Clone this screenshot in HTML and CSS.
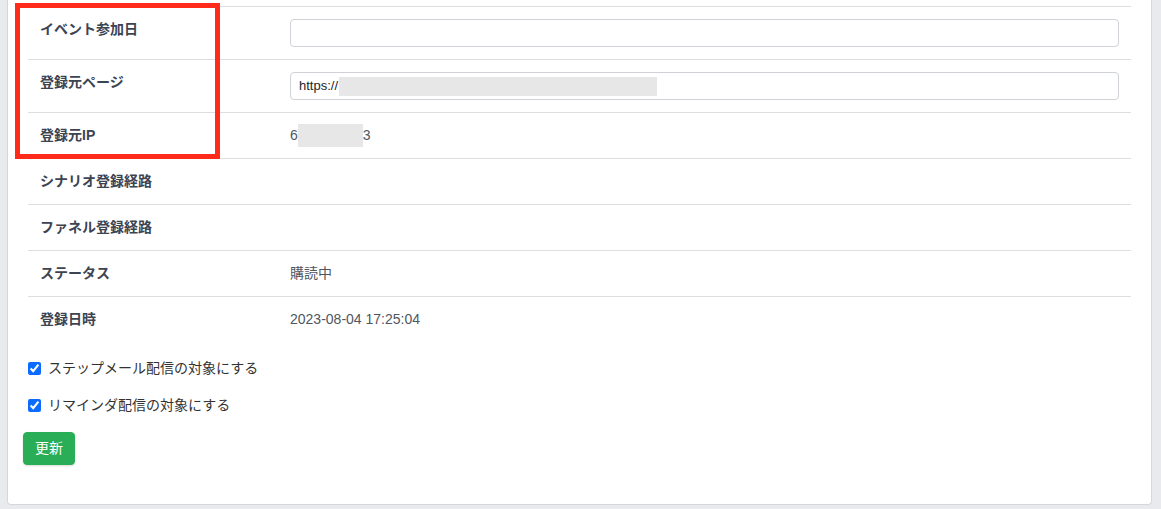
FILE: index.html
```html
<!DOCTYPE html>
<html lang="ja">
<head>
<meta charset="utf-8">
<title>登録情報</title>
<link rel="stylesheet" href="styles.css">
</head>
<body>
<div class="page">
  <div class="card">
    <table class="info-table">
      <tbody>
        <tr>
          <th>イベント参加日</th>
          <td><input class="text-input" type="text" value=""></td>
        </tr>
        <tr>
          <th>登録元ページ</th>
          <td><div class="text-input fake-input">https://<span class="redact redact-url"></span></div></td>
        </tr>
        <tr>
          <th>登録元IP</th>
          <td>6<span class="redact redact-ip"></span>3</td>
        </tr>
        <tr>
          <th>シナリオ登録経路</th>
          <td></td>
        </tr>
        <tr>
          <th>ファネル登録経路</th>
          <td></td>
        </tr>
        <tr>
          <th>ステータス</th>
          <td>購読中</td>
        </tr>
        <tr>
          <th>登録日時</th>
          <td>2023-08-04 17:25:04</td>
        </tr>
      </tbody>
    </table>
    <label class="check-row"><input type="checkbox" checked><span>ステップメール配信の対象にする</span></label>
    <label class="check-row"><input type="checkbox" checked><span>リマインダ配信の対象にする</span></label>
    <button class="btn-update" type="button">更新</button>
  </div>
  <div class="highlight"></div>
</div>
</body>
</html>
```

FILE: styles.css
```css
html, body {
  margin: 0;
  padding: 0;
  background: #e9eaed;
  height: 509px;
  overflow: hidden;
}

.page {
  position: relative;
  padding: 0 9px 0 7px;
  font-family: "Liberation Sans", "Noto Sans CJK JP", sans-serif;
  font-size: 14px;
  line-height: 21px;
  color: #495057;
}

.card {
  background: #fff;
  border: 1px solid #d5d7db;
  border-top: 0;
  border-radius: 0 0 4px 4px;
  padding: 6px 20px 38px 20px;
  height: 460px;
}

.info-table {
  width: 100%;
  border-collapse: collapse;
  margin-bottom: 16px;
}

.info-table th,
.info-table td {
  border-top: 1px solid #dcdee2;
  padding: 12px;
  vertical-align: top;
  text-align: left;
  height: 21px;
}

.info-table th {
  width: 226px;
  font-weight: 700;
  color: #3c4452;
}

.info-table td {
  font-weight: 400;
  color: #4f5661;
}

.text-input {
  display: block;
  box-sizing: border-box;
  width: 100%;
  height: 28px;
  margin: 0;
  border: 1px solid #cfd2d6;
  border-radius: 4px;
  background: #fff;
  padding: 0 8px;
  font-family: "Liberation Sans", "Noto Sans CJK JP", sans-serif;
  font-size: 13px;
  color: #212529;
}

.fake-input {
  display: flex;
  align-items: center;
  line-height: 18px;
}

.redact {
  display: inline-block;
  background: #e7e7e7;
  vertical-align: middle;
}

.redact-url {
  width: 318px;
  height: 19px;
  margin-left: 1px;
}

.redact-ip {
  width: 65px;
  height: 23px;
  margin-top: -1px;
  margin-bottom: -1px;
  vertical-align: top;
}

.check-row {
  display: flex;
  align-items: center;
  gap: 7px;
  height: 21px;
  margin-bottom: 16px;
  color: #333;
  font-size: 14px;
}

.check-row input {
  width: 13px;
  height: 13px;
  margin: 0;
  accent-color: #0b6cff;
}

.btn-update {
  display: block;
  margin-left: -5px;
  height: 33px;
  padding: 6px 11px;
  border: 1px solid #29ad57;
  border-radius: 4px;
  background: #29ad57;
  color: #fff;
  font-family: "Liberation Sans", "Noto Sans CJK JP", sans-serif;
  font-size: 14px;
  line-height: 19px;
  box-shadow: 0 1px 2px rgba(0, 0, 0, 0.15);
}

.highlight {
  position: absolute;
  left: 15px;
  top: 3px;
  width: 195px;
  height: 146px;
  border: 5px solid #ff2a1a;
}
```
